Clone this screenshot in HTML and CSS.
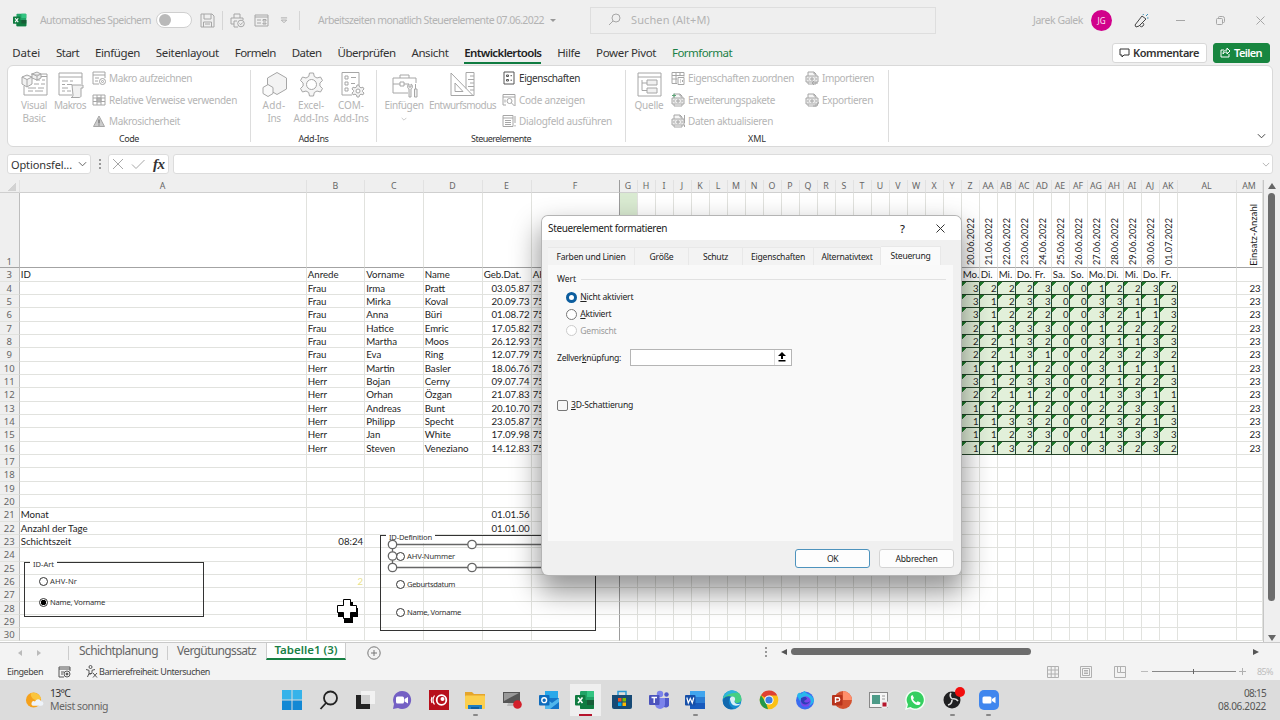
FILE: index.html
```html
<!DOCTYPE html>
<html lang="de">
<head>
<meta charset="utf-8">
<title>Arbeitszeiten monatlich Steuerelemente</title>
<link rel="stylesheet" href="styles.css">
</head>
<body>
<svg class="defs" aria-hidden="true">
  <symbol id="doc" viewBox="0 0 14 14"><path d="M3 5V1h6l2 2v2" fill="#f5f5f5"/><path d="M1 5h12v6H1z" fill="#ededed"/><path d="M3 11v2h8v-2M9 1v2h2M4 6.500L2.500 8 4 9.500M10 6.500L11.500 8 10 9.500M6 7h2v2H6z"/></symbol>
  <symbol id="chev" viewBox="0 0 10 6"><path d="M1 1l4 4 4-4"/></symbol>
  <symbol id="xl" viewBox="0 0 20 20"><rect x="5" y="1" width="14" height="18" rx="1.2" fill="#21a366"/><path d="M12 1h6a1 1 0 0 1 1 1v5h-7z" fill="#33c481"/><path d="M5 10h14v8a1 1 0 0 1-1 1H6a1 1 0 0 1-1-1z" fill="#107c41"/><path d="M12 10h7v5h-7z" fill="#185c37"/><rect x="0" y="5" width="10.5" height="10.5" rx="1" fill="#107c41"/><path d="M3 7.5l4.5 5.5M7.5 7.5L3 13" stroke="#fff" stroke-width="1.6" fill="none"/></symbol>
</svg>

<header class="titlebar">
  <svg class="app-icon" viewBox="0 0 20 20"><use href="#xl"/></svg>
  <span class="t-auto" data-w="111">Automatisches Speichern</span>
  <span class="toggle"><i></i></span>
  <svg class="ic save" viewBox="0 0 15 15"><path d="M1 1h11l2 2v11H1zM4 1v5h7V1M3.500 14V9h8v5M5 11h5"/></svg>
  <span class="vsep s1"></span>
  <svg class="ic print" viewBox="0 0 15 15"><path d="M4 5V1h6v4M4 11H1V5h12v2M4 8v6h4M4 8h3"/><circle cx="11" cy="10.500" r="3.300"/><path d="M9.500 10.500l1.200 1.200 2-2.200"/></svg>
  <svg class="ic form" viewBox="0 0 15 13"><path d="M1 1h13v11H1zM1 3h13M3 6h4M3 9h4M9 5.500h3v1.500H9zM9 9h3v1H9z"/></svg>
  <svg class="ic qat" viewBox="0 0 9 8"><path d="M1 1h7M1.500 3.500l3 3 3-3z"/></svg>
  <span class="vsep s2"></span>
  <span class="t-doc" data-w="226">Arbeitszeiten monatlich Steuerelemente 07.06.2022</span>
  <span class="caret"></span>
  <div class="search"><svg class="ic glass" viewBox="0 0 13 13"><circle cx="8" cy="5" r="4"/><path d="M5 8l-4 4"/></svg><span data-w="79">Suchen (Alt+M)</span></div>
  <span class="user" data-w="50">Jarek Galek</span>
  <span class="avatar">JG</span>
  <svg class="ic pen" viewBox="0 0 15 15"><path d="M1 12L8 3l4 3-7 7-3 1zM6 13a2 2 0 0 0 3-3"/><path d="M9 1l.5 1M12 3l2-2M13 5h1.500" class="blue"/></svg>
  <svg class="ic min" viewBox="0 0 9 9"><path d="M0 4.500h9"/></svg>
  <svg class="ic max" viewBox="0 0 9 9"><rect x=".5" y="2.500" width="6" height="6" rx="1"/><path d="M2.500 2.500v-1a1 1 0 0 1 1-1h3a2 2 0 0 1 2 2v3a1 1 0 0 1-1 1h-1"/></svg>
  <svg class="ic close" viewBox="0 0 9 9"><path d="M.5.5l8 8M8.500.5l-8 8"/></svg>
</header>

<nav class="menu">
  <span data-w="28">Datei</span><span data-w="23">Start</span><span data-w="45">Einfügen</span><span data-w="63">Seitenlayout</span><span data-w="41">Formeln</span><span data-w="30">Daten</span><span data-w="58">Überprüfen</span><span data-w="37">Ansicht</span><b data-w="77">Entwicklertools</b><span data-w="23">Hilfe</span><span data-w="60">Power Pivot</span><span class="green" data-w="60">Formformat</span>
  <div class="menu-right">
    <button class="comment"><svg class="ic" viewBox="0 0 11 10"><path d="M1 1h9v6H5L3 9V7H1z"/></svg><strong data-w="66">Kommentare</strong></button>
    <button class="share"><svg class="ic" viewBox="0 0 11 11"><path d="M4 3H1v7h8V7M3 7c0-3 2-4 4-4V1l3 3-3 3V5C5 5 4 5.500 3 7z"/></svg><strong data-w="28">Teilen</strong></button>
  </div>
</nav>

<section class="ribbon">
  <div class="group g-code">
    <div class="tools">
      <div class="big vb"><svg class="ic" viewBox="0 0 27 27"><path d="M10 3h16v21H3V15M14 5.500h12M15 9h4M21 9h3M13 13h5M20 13h4M7 17h8M17 17h6M7 20h5M14 20h8"/><path d="M1 6l5-2 5 2v7l-5 3-5-3zM1 6l5 2.500L11 6M6 8.500V16" fill="#f1f1f1"/><path d="M11 3l5-2 4 2v4l-4 2-5-2zM11 3l5 2 4-2M16 5v4" fill="#f1f1f1"/></svg><span data-w="26">Visual</span><span data-w="23">Basic</span></div>
      <div class="big mk"><svg class="ic" viewBox="0 0 27 27"><path d="M15 24H2V2h23v11M2 6h23M5 10h6M13 10h3M5 13.500h3M10 13.500h5M5 17h6M5 20h3M10 20h4"/><path d="M15 14h11v3h-2v8c0 1-1 1.500-2 1.500h-8c1 0 2-1 2-2.500z" fill="#f1f1f1"/></svg><span data-w="32">Makros</span></div>
      <div class="stack">
        <div class="row"><svg class="ic" viewBox="0 0 14 14"><path d="M7 13H1V1h12v6M1 4h12M3 7h4M3 10h3"/><circle cx="10.500" cy="10.500" r="3"/><circle cx="10.500" cy="10.500" r="1"/></svg><span data-w="83">Makro aufzeichnen</span></div>
        <div class="row"><svg class="ic" viewBox="0 0 14 14"><path d="M1 2h12v10H1zM1 5h12M1 8.500h12M5 2v10M9 2v10"/><path d="M5 5h4v4H5z" fill="#bbb"/></svg><span data-w="128">Relative Verweise verwenden</span></div>
        <div class="row"><svg class="ic" viewBox="0 0 14 14"><path d="M7 2l5.500 10.500h-11z" fill="#ccc"/><path d="M7 5.500v4M7 10.500v1" class="dark"/></svg><span data-w="71">Makrosicherheit</span></div>
      </div>
    </div>
    <div class="caption"><span data-w="20">Code</span></div>
  </div>
  <div class="group g-add">
    <div class="tools">
      <div class="big ad"><svg class="ic" viewBox="0 0 27 27"><path d="M16 1.500l9.500 5.500v11L16 23.500 6.500 18V7z" fill="#f3f3f3"/><path d="M7 13.500l5 3v6l-5 3-5-3v-6z" fill="#fafafa"/></svg><span data-w="23">Add-</span><span data-w="13">Ins</span></div>
      <div class="big ex"><svg class="ic" viewBox="0 0 27 27"><path d="M11.500 2h4l.8 3.500 2.700 1.500 3.500-1 2 3.500-2.600 2.500v3l2.600 2.500-2 3.500-3.500-1-2.700 1.500-.8 3.500h-4l-.8-3.500L8 20l-3.500 1-2-3.500L5.100 15v-3L2.500 9.500l2-3.500L8 7l2.700-1.500z" fill="#f5f5f5"/><circle cx="13.500" cy="13.500" r="5" fill="#fff"/></svg><span data-w="26">Excel-</span><span data-w="35">Add-Ins</span></div>
      <div class="big co"><svg class="ic" viewBox="0 0 27 27"><path d="M14 24H4V1.500h17V14M7 5h3v3H7zM7 11h3v3H7zM7 17h3v3H7zM13 6.500h5M13 12.500h4"/><path d="M19 14h2l.5 2 1.500.8 2-.6 1 1.800-1.500 1.400v1.200l1.500 1.400-1 1.800-2-.6-1.500.8-.5 2h-2l-.5-2-1.500-.8-2 .6-1-1.800 1.500-1.400v-1.200L14 18l1-1.800 2 .6 1.500-.8z" fill="#f3f3f3"/><circle cx="20" cy="20" r="2" fill="#fff"/></svg><span data-w="26">COM-</span><span data-w="35">Add-Ins</span></div>
    </div>
    <div class="caption"><span data-w="30">Add-Ins</span></div>
  </div>
  <div class="group g-ctl">
    <div class="tools">
      <div class="big in"><svg class="ic" viewBox="0 0 27 27"><path d="M17 22H2V7h23v5M9 7V4h9v3M2 13h7M13 13h5M9 11h4v4H9z"/><path d="M18 26v-8c-2-1-2-4 0-5v3h2v-3c2 1 2 4 0 5v8zM24.500 13v5M23.500 18h2.500v8h-2.500z" fill="#f1f1f1"/></svg><span data-w="39">Einfügen</span><svg class="ic tiny" viewBox="0 0 10 6"><use href="#chev"/></svg></div>
      <div class="big en"><svg class="ic" viewBox="0 0 27 27"><path d="M2 2l22 22.500H2zM6 12l8 8.500H6z"/><path d="M17 17.500v-16h8v23h-1M21 5h4M19 8.500h6M21 12h4M19 15.500h6M21 19h4" fill="none"/></svg><span data-w="67">Entwurfsmodus</span></div>
      <div class="stack">
        <div class="row on"><svg class="ic" viewBox="0 0 14 14"><path d="M2 1h10v12H2zM4.500 4h2v1.500h-2zM4.500 8.500h2V10h-2zM8.500 4.700H10M8.500 9.200H10"/></svg><span data-w="61">Eigenschaften</span></div>
        <div class="row"><svg class="ic" viewBox="0 0 14 14"><path d="M4 12H1V1.500h12V13M1 4h12M3 6.500v3"/><circle cx="7.500" cy="8" r="2.500"/><path d="M9.500 10l3 3"/></svg><span data-w="66">Code anzeigen</span></div>
        <div class="row"><svg class="ic" viewBox="0 0 14 14"><path d="M1 1.500h10v11H1zM1 4h10M3 6.500h6M3 8.500h6M3 10.500h6M13 2v7M13 11v1.500"/></svg><span data-w="93">Dialogfeld ausführen</span></div>
      </div>
    </div>
    <div class="caption"><span data-w="60">Steuerelemente</span></div>
  </div>
  <div class="group g-xml">
    <div class="tools">
      <div class="big qu"><svg class="ic" viewBox="0 0 27 27"><path d="M2 2h23v23H2zM2 6h23" /><path d="M6 9v10.500h5M6 12h5"/><path d="M11 9h10v5H11zM11 17h10v5H11z" fill="#f1f1f1"/></svg><span data-w="29">Quelle</span></div>
      <div class="stack st1">
        <div class="row"><svg class="ic" viewBox="0 0 14 14"><path d="M6 12.500H1V1.500h12v4M1 4.500h12M1 8h5M5 1.500v11M9 1.500v3M7 6.500h6v7H7zM9 9h1M9 11h1M11.500 9v2"/></svg><span data-w="106">Eigenschaften zuordnen</span></div>
        <div class="row"><svg class="ic" viewBox="0 0 14 14"><use href="#doc"/><path d="M1 2.500h4M3 .5v4" class="grn"/></svg><span data-w="87">Erweiterungspakete</span></div>
        <div class="row"><svg class="ic" viewBox="0 0 14 14"><use href="#doc"/><path d="M13.500 1v8M13.500 11v2"/></svg><span data-w="85">Daten aktualisieren</span></div>
      </div>
      <div class="stack st2">
        <div class="row"><svg class="ic" viewBox="0 0 14 14"><use href="#doc"/><path d="M13 12H7l2-2M7 12l2 2"/></svg><span data-w="52">Importieren</span></div>
        <div class="row"><svg class="ic" viewBox="0 0 14 14"><use href="#doc"/><path d="M8 13h4l1.500-4"/></svg><span data-w="51">Exportieren</span></div>
      </div>
    </div>
    <div class="caption"><span data-w="18">XML</span></div>
  </div>
  <svg class="ic collapse" viewBox="0 0 10 6"><use href="#chev"/></svg>
</section>

<div class="formula">
  <div class="namebox"><span data-w="61">Optionsfel...</span><svg class="ic" viewBox="0 0 10 6"><use href="#chev"/></svg></div>
  <span class="dots"><i></i><i></i><i></i></span>
  <div class="fx"><svg class="ic" viewBox="0 0 34 14"><path d="M2 2l10 10M12 2L2 12M21 7.500l4 4L33.500 3"/></svg><em>fx</em></div>
  <div class="fxinput"><svg class="ic" viewBox="0 0 10 6"><use href="#chev"/></svg></div>
</div>

<main class="work">
  <div class="sheet" id="sheet"></div>
  <div class="vscroll"><i class="up"></i><b></b><i class="down"></i></div>

  <div class="gbox art"><span class="glabel" data-w="21">ID-Art</span>
    <div class="opt"><i class="ring"></i><span data-w="27">AHV-Nr</span></div>
    <div class="opt sel"><i class="ring"></i><span data-w="55">Name, Vorname</span></div>
  </div>
  <div class="gbox def"><span class="glabel" data-w="43">ID-Definition</span>
    <div class="opt"><i class="ring"></i><span data-w="48">AHV-Nummer</span></div>
    <div class="opt"><i class="ring"></i><span data-w="48">Geburtsdatum</span></div>
    <div class="opt"><i class="ring"></i><span data-w="54">Name, Vorname</span></div>
  </div>
  <svg class="handles" viewBox="0 0 180 36"><path d="M6 6.500h174M6 29.500h174M6.500 6v24"/><circle cx="6.500" cy="6.500" r="4.200"/><circle cx="6.500" cy="18" r="4.200"/><circle cx="6.500" cy="29.500" r="4.200"/><circle cx="86" cy="6.500" r="4.200"/><circle cx="86" cy="29.500" r="4.200"/></svg>
  <svg class="cursor" viewBox="0 0 24 26"><path d="M9 4h8v6h5v9h-5v6H8v-6H2v-5z" fill="#000"/><path d="M7.500 1.500h7v6h6v7h-6v6h-7v-6h-6v-7h6z" fill="#fff" stroke="#000"/></svg>
</main>

<div class="sheettabs">
  <i class="nav-l"></i><i class="nav-r"></i><span class="div"></span>
  <span class="st" data-w="79">Schichtplanung</span><span class="div d2"></span><span class="st" data-w="79">Vergütungssatz</span>
  <span class="active"><b data-w="63">Tabelle1 (3)</b></span>
  <svg class="ic add" viewBox="0 0 14 14"><circle cx="7" cy="7" r="6.200"/><path d="M7 4v6M4 7h6"/></svg>
  <div class="hscroll"><span class="dots"><i></i><i></i><i></i></span><i class="left"></i><b></b><i class="right"></i></div>
</div>

<footer class="status">
  <span data-w="36">Eingeben</span>
  <svg class="ic rec" viewBox="0 0 13 12"><path d="M6 11H1V1h11v4M1 3h11M3 6h3M3 8h2"/><circle cx="9" cy="8" r="3"/><circle cx="9" cy="8" r="1" fill="#444"/></svg>
  <svg class="ic acc" viewBox="0 0 13 13"><circle cx="5.500" cy="2" r="1.500"/><path d="M1 4.500l3 .8v3L2.500 12M10 4.500l-3 .8v3M4 8.500h3M4.500 9l1 1M8 8l4 4.500M12 8l-4 4.500"/></svg>
  <span data-w="111">Barrierefreiheit: Untersuchen</span>
  <div class="views">
    <svg class="ic" viewBox="0 0 12 12"><path d="M.5.500h11v11H.5zM.5 4h11M.5 8h11M4.200.5v11M8 .5v11"/></svg>
    <svg class="ic" viewBox="0 0 12 12"><path d="M.5.500h11v11H.5zM2.500 2.500h7v7h-7zM4 4.500h4M4 6h4M4 7.500h4"/></svg>
    <svg class="ic" viewBox="0 0 12 12"><path d="M.5.500h11v11H.5zM3.500.5v6h3M6.500.5v6h5"/></svg>
    <span class="minus"></span><span class="track"><i></i></span><svg class="ic plus" viewBox="0 0 7 7"><path d="M0 3.500h7M3.500 0v7"/></svg><span class="pct" data-w="16">85%</span>
  </div>
</footer>

<footer class="taskbar">
  <svg class="weather" viewBox="0 0 20 20"><circle cx="9" cy="10" r="8" fill="#f5a11c"/><path d="M6 3a8 8 0 0 1 11 6 7 7 0 0 1-11-6z" fill="#fbc53c"/><path d="M8 16h9a2.400 2.400 0 0 0 0-4.800 3.500 3.500 0 0 0-6.500.4A2.300 2.300 0 0 0 8 16z" fill="#eef3f9"/></svg>
  <div class="wtext"><span data-w="20">13°C</span><span class="dim" data-w="58">Meist sonnig</span></div>
  <div class="apps">
    <span><svg viewBox="0 0 20 20"><path d="M0 0h9.500v9.500H0zM10.500 0H20v9.500h-9.500z" fill="#36b3ea"/><path d="M0 10.500h9.500V20H0zM10.500 10.500H20V20h-9.500z" fill="#1388d4"/></svg></span>
    <span><svg viewBox="0 0 20 20" fill="none" stroke="#222" stroke-width="1.800"><circle cx="11.500" cy="8" r="6.500"/><path d="M7 13l-5.500 6"/></svg></span>
    <span><svg viewBox="0 0 20 20"><rect x="1" y="5" width="14" height="14" fill="#222"/><rect x="6" y="1" width="14" height="13" fill="#f5f5f5" opacity=".88"/><rect x="6" y="5" width="9" height="9" fill="#cfcfcf"/></svg></span>
    <span><svg viewBox="0 0 20 20"><path d="M10 1a9 9 0 1 1-4 17l-5 1 1-5A9 9 0 0 1 10 1z" fill="#7460c4"/><rect x="4" y="6.500" width="8" height="7" rx="1.500" fill="#fff"/><path d="M12.500 9l3.500-2v6.500l-3.500-2z" fill="#fff"/></svg></span>
    <span><svg viewBox="0 0 20 20"><rect width="20" height="20" fill="#b8101b"/><g fill="none" stroke="#fff"><circle cx="12.500" cy="10" r="4.800" stroke-width="1.800"/><path d="M5.500 5.500q-3 4.500 0 9M3 7q-1.500 3 0 6" stroke-width="1.200"/></g><circle cx="13.500" cy="9" r="2" fill="#fff"/></svg></span>
    <span class="run"><svg viewBox="0 0 20 20"><path d="M0 2h7l2 2h11v4H0z" fill="#e5a52c"/><rect y="5.500" width="20" height="13.500" rx="1" fill="#fbcf4e"/><path d="M3 19v-4h14v4z" fill="#1c7fc4"/><path d="M6 17h8v2H6z" fill="#0f5c9c"/></svg></span>
    <span><svg viewBox="0 0 20 20"><path d="M1 2h17v11H1z" fill="#555"/><path d="M2 3h15L2 11z" fill="#999"/><path d="M5 16h8v-3H6z" fill="#bbb"/><circle cx="15.500" cy="14.500" r="4.300" fill="#d3202b"/></svg></span>
    <span><svg viewBox="0 0 20 20"><rect x="6" y="1" width="13" height="14" fill="#28a8ea"/><path d="M6 8h14v11H6z" fill="#1475c8"/><path d="M6 8l7 5 7-5v4l-9 7H6z" fill="#50b6ec"/><rect y="5" width="10.500" height="10.500" rx="1" fill="#0f6cbd"/><circle cx="5.200" cy="10.200" r="2.400" fill="none" stroke="#fff" stroke-width="1.400"/></svg></span>
    <span class="cur"><svg viewBox="0 0 20 20"><use href="#xl"/></svg></span>
    <span><svg viewBox="0 0 20 20"><path d="M6 5V1.500h8V5" fill="none" stroke="#2b9bd7" stroke-width="1.500"/><path d="M0 5h20v12a2 2 0 0 1-2 2H2a2 2 0 0 1-2-2z" fill="#174a75"/><path d="M6 8h3.500v3.500H6z" fill="#f25022"/><path d="M10.500 8H14v3.500h-3.500z" fill="#7fba00"/><path d="M6 12.500h3.500V16H6z" fill="#00a4ef"/><path d="M10.500 12.500H14V16h-3.500z" fill="#ffb900"/></svg></span>
    <span><svg viewBox="0 0 20 20"><circle cx="11" cy="4" r="3.200" fill="#7b83eb"/><circle cx="17.500" cy="4.500" r="2.200" fill="#5059c9"/><path d="M14 8h6v6a3 3 0 0 1-6 1z" fill="#5059c9"/><path d="M6 8h10v6a5 5 0 0 1-10 0z" fill="#7b83eb"/><rect y="5" width="10.500" height="10" rx="1" fill="#4b53bc"/><path d="M2.500 7.500h5.500M5.200 7.500v5.500" stroke="#fff" stroke-width="1.400"/></svg></span>
    <span class="run"><svg viewBox="0 0 20 20"><path d="M5 1h15v6H5z" fill="#41a5ee"/><path d="M5 7h15v6H5z" fill="#2b7cd3"/><path d="M5 13h15v6H5z" fill="#185abd"/><rect y="5" width="10.500" height="10.500" rx="1" fill="#164fa8"/><path d="M1.800 7.500l1.500 5.500 2-4.500 2 4.500 1.500-5.500" fill="none" stroke="#fff" stroke-width="1.200"/></svg></span>
    <span><svg viewBox="0 0 20 20"><circle cx="10" cy="10" r="9.500" fill="#158bd0"/><path d="M1 8C3-1 19-2 19.500 9c0 5-7 5-7 2 1-2-1-5-5-4.500C4 7 2 9 1 8z" fill="#46cf83"/><path d="M1 8C3 0 12-2 16 3 10 2 5 5 1 8z" fill="#2fb4dc"/><path d="M8 7c5-2 6 2 4.500 4-.5 2 2 4 6 2.500-2 3-7 3-9 0-1-2-2-4.500-1.500-6.500z" fill="#d9f0f7"/><path d="M1 10c2-5 7-4 8-3-4 3-2 10 3 11.500C6 21 0 16 1 10z" fill="#1269ae"/></svg></span>
    <span><svg viewBox="0 0 20 20"><circle cx="10" cy="10" r="9.300" fill="#fbc116"/><path d="M10 10L2 5.200a9.300 9.300 0 0 1 16.300.3H10z" fill="#df4032"/><path d="M2 5.200l5 7.500L9 19.200A9.300 9.300 0 0 1 2 5.200z" fill="#23984c"/><circle cx="10" cy="10" r="4.600" fill="#fff"/><circle cx="10" cy="10" r="3.600" fill="#3c7fe2"/></svg></span>
    <span><svg viewBox="0 0 20 20"><circle cx="10" cy="10.500" r="9" fill="#3b6cf0"/><path d="M2 6C3 2 5 2 6 4c2-1 2-3 4-3-1 3 9 3 9 10-3 7-14 7-14 0z" fill="#28b7ec"/><circle cx="10.500" cy="11.500" r="5.200" fill="#7a45ea"/><path d="M6 8c3-1 5-2 6 1l-3 2c1 2 4 2 6 0-1 4-8 5-9 0z" fill="#2b3fb8"/></svg></span>
    <span><svg viewBox="0 0 20 20"><circle cx="11" cy="10" r="9" fill="#d35230"/><path d="M11 1a9 9 0 0 1 9 9h-9z" fill="#ff8f6b"/><rect y="5" width="10.500" height="10.500" rx="1" fill="#b7321b"/><path d="M3.500 13V7.700H6a1.700 1.700 0 0 1 0 3.400H3.500" fill="none" stroke="#fff" stroke-width="1.400"/></svg></span>
    <span><svg viewBox="0 0 20 20"><rect x=".5" y="2.500" width="18" height="15" fill="#f5f5f5" stroke="#888"/><rect x="3" y="5" width="8" height="9" fill="#4d9b88"/><path d="M13 6h3M13 9h3" stroke="#999"/><circle cx="15.500" cy="14.500" r="4" fill="#eee"/><rect x="13.500" y="12.500" width="4" height="4" fill="#b5152b"/></svg></span>
    <span><svg viewBox="0 0 20 20"><path d="M10 0a10 10 0 1 1-5 18.500L0 20l1.500-5A10 10 0 0 1 10 0z" fill="#f3fff5"/><path d="M10 1.500a8.500 8.500 0 1 1-4.500 15.500L2 18l1-3.500A8.500 8.500 0 0 1 10 1.500z" fill="#35cf60"/><path d="M6 6l1.500-1 1.500 3-1 1.200c1 1.800 2 2.500 3.500 3.200l1.200-1.200 2.800 1.300c0 2-1.500 2.700-3 2.500C9 14.500 5 10 6 6z" fill="#fff"/></svg></span>
    <span class="run"><svg class="obs" viewBox="0 0 22 22"><circle cx="9" cy="13" r="8.500" fill="#202022"/><path d="M9 12q-3-3-1-6M9 12q4-1 6 2M9 13q0 4-4 5" fill="none" stroke="#ddd" stroke-width="1.600"/><circle cx="17" cy="5" r="5" fill="#f20d0d"/></svg></span>
    <span class="run"><svg viewBox="0 0 20 20"><rect width="20" height="20" rx="5" fill="#3f86ee"/><rect x="3.500" y="6.500" width="9" height="7" rx="1.500" fill="#fff"/><path d="M13 9l3.500-2.300v6.500L13 11z" fill="#fff"/></svg></span>
  </div>
  <div class="clock"><span data-w="22">08:15</span><span data-w="48">08.06.2022</span></div>
</footer>

<div class="dialog">
  <div class="dtitle"><span data-w="119">Steuerelement formatieren</span><b>?</b><svg class="ic" viewBox="0 0 9 9"><path d="M.5.5l8 8M8.500.5l-8 8"/></svg></div>
  <div class="dtabs"><span class="w1"><i data-w="69">Farben und Linien</i></span><span class="w2"><i data-w="24">Größe</i></span><span class="w2"><i data-w="25">Schutz</i></span><span class="w3"><i data-w="54">Eigenschaften</i></span><span class="w4"><i data-w="51">Alternativtext</i></span><span class="w5"><i data-w="40">Steuerung</i></span></div>
  <div class="dpanel">
    <div class="legend"><span data-w="19">Wert</span><hr></div>
    <div class="radio on"><i></i><span data-w="53"><u>N</u>icht aktiviert</span></div>
    <div class="radio"><i></i><span data-w="31"><u>A</u>ktiviert</span></div>
    <div class="radio off"><i></i><span data-w="36">Gemischt</span></div>
    <div class="link"><span data-w="64">Zellver<u>k</u>nüpfung:</span><div class="ref"><div class="refbtn"><svg viewBox="0 0 8 10"><path d="M4 0l4 4H5v3H3V4H0zM.5 8h7v1.500h-7z"/></svg></div></div></div>
    <div class="check"><i></i><span data-w="62"><u>3</u>D-Schattierung</span></div>
  </div>
  <div class="dbtns"><button class="ok"><span data-w="11">OK</span></button><button><span data-w="42">Abbrechen</span></button></div>
</div>
<script src="app.js"></script>
</body>
</html>
```
FILE: styles.css
```css
* { box-sizing: border-box; }
body { margin: 0; width: 1280px; height: 720px; overflow: hidden; background: #efefef; font-family: "Noto Sans", "Open Sans", sans-serif; font-size: 10px; color: #333; display: flex; flex-direction: column; position: relative; font-variant-ligatures: none; }
span, b, strong, i, em { white-space: nowrap; font-style: normal; }
b, strong { font-weight: 600; }
svg { flex: none; }
button { font: inherit; color: inherit; padding: 0; }
.defs { position: absolute; width: 0; height: 0; }
.ic { fill: none; stroke: #a6a6a6; stroke-width: 1; }

/* title bar */
.titlebar { height: 40px; display: flex; align-items: center; flex: none; color: #b3b3b3; font-size: 10.5px; }
.app-icon { width: 14px; height: 14px; margin: 0 13px; }
.t-auto { width: 111px; }
.toggle { width: 36px; height: 16px; margin-left: 5px; border: 1px solid #cfcfcf; border-radius: 8px; background: #fff; display: flex; align-items: center; padding-left: 2px; }
.toggle i { width: 12px; height: 12px; border-radius: 50%; background: #b9b9b9; }
.save { width: 15px; height: 15px; margin-left: 8px; }
.vsep { width: 1px; height: 19px; background: #d5d5d5; }
.s1 { margin-left: 7px; }
.print { width: 15px; height: 15px; margin-left: 7px; }
.form { width: 15px; height: 13px; margin-left: 9px; }
.qat { width: 8px; height: 7px; margin-left: 11px; }
.s2 { margin-left: 11px; }
.t-doc { width: 227px; margin-left: 18px; }
.caret { border: 3px solid transparent; border-top-color: #999; border-bottom: 0; margin-left: 5px; }
.search { width: 346px; height: 27px; margin-left: 34px; border: 1px solid #dedede; display: flex; align-items: center; font-size: 11px; padding: 0 0 1px 17px; }
.glass { width: 13px; height: 13px; margin-right: 10px; }
.user { width: 50px; margin-left: 97px; }
.avatar { width: 21px; height: 21px; margin-left: 8px; border-radius: 50%; background: #d1008b; color: #ffe6f6; font-size: 8px; display: flex; align-items: center; justify-content: center; }
.pen { width: 15px; height: 15px; margin-left: 21.500px; stroke: #444; }
.blue { stroke: #3a8fb7; }
.min { width: 9px; height: 9px; margin-left: 27px; }
.max { width: 9px; height: 9px; margin-left: 31px; }
.close { width: 9px; height: 9px; margin-left: 31px; }

/* ribbon tabs */
.menu { height: 25px; flex: none; display: flex; align-items: center; gap: 15.900px; padding-left: 12.200px; font-size: 11.5px; }
.menu > b { height: 21px; line-height: 19px; border-bottom: 2px solid #107c41; margin-top: 1px; color: #222; }
.menu .green { color: #1b7f46; }
.menu-right { margin-left: auto; padding-right: 10px; display: flex; gap: 6px; }
.menu-right button { height: 20px; border-radius: 3px; display: flex; align-items: center; border: 1px solid #d8d8d8; background: #fff; padding: 0 6px; gap: 3px; font-size: 11px; }
.comment { width: 95px; }
.comment .ic { width: 11px; height: 10px; stroke: #333; }
.menu-right .share { width: 57px; background: #188640; border-color: #188640; color: #fff; }
.share .ic { width: 11px; height: 11px; stroke: #fff; }

/* ribbon */
.ribbon { height: 82px; flex: none; margin: 0 7px; border: 1px solid #d9d9d9; border-radius: 6px; background: #fff; display: flex; padding: 4px 0; }
.group { display: flex; flex-direction: column; border-right: 1px solid #ddd; color: #b5b5b5; }
.g-code { width: 243px; }
.g-add { width: 126px; }
.g-ctl { width: 249px; }
.g-xml { width: 263px; }
.tools { display: flex; height: 63px; flex: none; }
.caption { height: 12px; line-height: 12px; text-align: center; font-size: 9px; color: #333; }
.big { display: flex; flex-direction: column; align-items: center; font-size: 10px; line-height: 13.300px; }
.big .ic { width: 27px; height: 27px; margin: 1px 0 1px; }
.big .tiny { width: 6px; height: 4px; margin: 5px 0 0; }
.vb { width: 36px; margin-left: 8px; }
.mk { width: 36px; }
.ad { width: 36px; margin-left: 5px; }
.ex { width: 38px; }
.co { width: 42px; }
.in { width: 42px; margin-left: 6px; }
.en { width: 69px; margin-left: 3px; }
.qu { width: 34px; margin-left: 6px; }
.stack { display: flex; flex-direction: column; margin-left: 4px; }
.row { height: 21.400px; flex: none; margin-top: -2px; padding-bottom: 1px; display: flex; align-items: center; gap: 3px; font-size: 10px; }
.row + .row { margin-top: 0; }
.row .ic { width: 14px; height: 14px; }
.row.on { color: #333; }
.row.on .ic, .ic .dark { stroke: #555; }
.ic .grn { stroke: #5aa577; }
.g-ctl .stack { margin-left: 5px; }
.st1 { margin-left: 5px; }
.g-xml .st2 { margin-left: 11px; }
.collapse { width: 9px; height: 6px; margin: auto 6px 3px auto; stroke: #333; }

/* formula bar */
.formula { height: 33px; flex: none; display: flex; padding: 7px 7px 0; }
.namebox, .fx, .fxinput { height: 20px; background: #fff; border: 1px solid #dcdcdc; border-radius: 3px; display: flex; align-items: center; }
.namebox { width: 84px; padding-left: 3px; gap: 6px; font-size: 11px; }
.namebox .ic { width: 9px; height: 6px; stroke: #555; }
.dots { display: flex; flex-direction: column; gap: 2px; justify-content: center; }
.dots i { width: 2px; height: 2px; background: #999; }
.formula .dots { height: 20px; margin: 0 7.500px; }
.fx { width: 61px; padding-left: 2px; }
.fx .ic { width: 34px; height: 14px; }
.fx em { font: italic bold 15px/18px "Liberation Serif", serif; margin-left: 8px; letter-spacing: -.5px; }
.fxinput { flex: 1; margin-left: 4px; justify-content: flex-end; padding-right: 2px; }
.fxinput .ic { width: 8px; height: 5px; }

/* worksheet */
.work { height: 463px; flex: none; display: flex; position: relative; border-bottom: 1px solid #c9c9c9; overflow: hidden; }
.sheet { width: 1262.500px; flex: none; display: grid; grid-template-columns: 19.500px 287px 58.500px 58.500px 59px 49px 88px repeat(31, 18px) 59px 26px; grid-template-rows: 13px 75.300px repeat(28, 13.340px); background: #fff; font: 9.700px/13.200px "Lato", "Noto Sans", sans-serif; color: #1d1d1d; }
.c { border-right: 1px solid #e1e2de; border-bottom: 1px solid #e1e2de; padding: 0 .8px 0 1.200px; white-space: nowrap; min-width: 0; min-height: 0; }
.c.h { background: #efefef; color: #666; text-align: center; font: 8.800px/13px "Noto Sans", sans-serif; border-bottom-color: #cfcfcf; border-right-color: #e1e1e1; padding: 0; }
.c.n { background: #efefef; color: #666; text-align: center; font: 9.500px/14px "Noto Sans", sans-serif; border-right-color: #bdbdbd; padding: 0; }
.c.r { text-align: right; }
.c.frz { border-bottom-color: #a3a3a3; }
.c.split { border-right-color: #9c9c9c; }
.c.date { display: flex; align-items: flex-end; justify-content: center; padding: 0 0 2px 1px; font-size: 9.200px; }
.c.date span { writing-mode: vertical-rl; transform: rotate(180deg); line-height: 14px; }
.c.long { font-size: 9.600px; padding: 0 0 1px 9px; }
.c.tint { background: #d9ead1; }
.c.k { background: linear-gradient(135deg, #1d7a2b 2.800px, transparent 3.300px) #e2f0da; border-color: #25452a; text-align: right; padding-right: 0; }
.c.ktop { border-bottom-color: #25452a; }
.c.yel { color: #e9e28a; text-align: right; }
.c.one { padding-top: 62px; }
.corner { width: 8px; height: 8px; margin: 3px 0 0 8px; background: linear-gradient(135deg, transparent 50%, #d2d2d2 50%); }
.vscroll { flex: 1; display: flex; flex-direction: column; align-items: center; border-left: 1px solid #c6c6c6; padding: 3px 0 1px; }
.vscroll b { width: 7px; height: 408px; background: #6c6c6c; border-radius: 4px; margin-top: 4px; }
.up { border: 4px solid transparent; border-bottom: 6px solid #666; border-top: 0; }
.down { border: 4px solid transparent; border-top: 6px solid #666; border-bottom: 0; margin-top: auto; }

/* form controls floating above the cells */
.gbox { position: absolute; border: 1px solid #333; font-size: 7.600px; line-height: 10px; color: #333; }
.glabel { position: absolute; top: -4px; left: 5px; background: #fff; padding: 0 3px; line-height: 11px; height: 11px; }
.art { left: 24px; top: 382px; width: 180px; height: 55px; padding: 13px 0 0 14px; }
.def { left: 380px; top: 355px; width: 216px; height: 96px; padding: 15px 0 0 15px; }
.opt { display: flex; align-items: center; gap: 2px; height: 10px; }
.art .opt + .opt { margin-top: 11px; }
.def .opt + .opt { margin-top: 18px; }
.ring { width: 9px; height: 9px; border: 1.200px solid #333; border-radius: 50%; background: #fff; }
.sel .ring { background: radial-gradient(circle, #000 2.500px, #fff 3px); }
.handles { position: absolute; left: 386px; top: 357.500px; width: 180px; height: 36px; fill: #fff; stroke: #666; stroke-width: 1.300; }
.cursor { position: absolute; left: 336px; top: 418px; width: 24px; height: 26px; }

/* sheet tabs */
.sheettabs { height: 20px; flex: none; display: flex; align-items: center; background: #f3f3f3; font-size: 12px; color: #666; }
.nav-l, .nav-r, .left, .right { border: 3.500px solid transparent; }
.nav-l { border-right: 4px solid #bbb; border-left: 0; margin-left: 18px; }
.nav-r { border-left: 4px solid #bbb; border-right: 0; margin-left: 15px; }
.div { width: 1px; height: 14px; background: #ccc; margin: 0 10px 0 27px; }
.d2 { margin: 0 9px 0 9px; }
.st { height: 18px; line-height: 14px; }
.active { width: 80px; height: 17px; margin: -3px 0 0 10px; border: 1px solid #ccc; border-top: 0; border-bottom: 2px solid #168043; background: #fff; color: #1a7f46; line-height: 14px; text-align: center; font-size: 11.500px; }
.add { width: 14px; height: 14px; margin-left: 21px; stroke: #777; }
.hscroll { margin: -3px 0 0 auto; display: flex; align-items: center; width: 515px; }
.left { border-right: 6px solid #555; border-left: 0; margin-left: 14px; }
.right { border-left: 6px solid #555; border-right: 0; margin-left: auto; margin-right: 21px; }
.hscroll b { width: 240px; height: 7px; border-radius: 4px; background: #6c6c6c; margin-left: 4px; }

/* status bar */
.status { height: 17px; flex: none; display: flex; align-items: center; background: #f3f3f3; font-size: 9px; color: #444; padding-left: 7px; }
.status .ic { stroke: #555; }
.rec { width: 13px; height: 12px; margin-left: 15px; }
.acc { width: 13px; height: 13px; margin: 0 1px 0 14px; }
.views { margin-left: auto; display: flex; align-items: center; color: #bdbdbd; padding-right: 7px; }
.status .views .ic { width: 12px; height: 12px; margin-right: 21.500px; stroke: #b0b0b0; }
.minus { width: 7px; height: 1px; background: #bbb; margin-left: -6px; }
.track { width: 84px; height: 1px; background: #888; margin-left: 4px; }
.track i { display: block; width: 1px; height: 5px; margin: -2px 0 0 41px; background: #666; }
.status .views .plus { width: 7px; height: 7px; margin: 0 11px 0 3px; }

/* taskbar */
.taskbar { height: 40px; flex: none; display: flex; align-items: center; background: #dcdcdc; color: #333; font-size: 10.500px; }
.weather { width: 19px; height: 20px; margin-left: 25px; }
.wtext { width: 60px; margin: 0 0 0 6px; display: flex; flex-direction: column; align-items: flex-start; line-height: 13.500px; }
.dim { color: #666; }
.apps { display: flex; margin-left: 163.700px; }
.apps span { width: 36.680px; height: 40px; display: flex; align-items: center; justify-content: center; position: relative; }
.apps svg { width: 20px; height: 20px; }
.apps .obs { width: 22px; height: 22px; margin: -4px 0 0 3px; }
.run::after { content: ""; position: absolute; bottom: 4px; left: 16px; width: 5px; height: 2px; border-radius: 1px; background: #888; }
.apps .cur { background: linear-gradient(#efefef, #efefef) center / 31px 32px no-repeat; }
.cur::after { content: ""; position: absolute; bottom: 4px; left: 12px; width: 13px; height: 2px; background: #b5142c; }
.clock { margin: 0 14px 0 auto; display: flex; flex-direction: column; align-items: flex-end; line-height: 13.500px; color: #555; font-size: 10px; }

/* dialog window */
.dialog { position: absolute; left: 542px; top: 216px; width: 419px; height: 359px; border-radius: 6px; background: #f0f0f0; box-shadow: 0 0 0 1px #b4b4b4, 0 14px 28px 3px rgba(0, 0, 0, .42); display: flex; flex-direction: column; overflow: hidden; font-size: 8.600px; color: #222; }
.dialog i { display: inline-block; }
.dtitle { height: 24px; background: #fff; display: flex; align-items: center; padding: 0 16px 0 6px; font-size: 10px; }
.dtitle b { margin-left: auto; font-weight: 500; font-size: 11px; }
.dtitle svg { width: 9px; height: 9px; margin-left: 31px; stroke: #333; }
.dtabs { height: 25px; display: flex; align-items: flex-end; padding-left: 6px; }
.dtabs span { height: 18px; line-height: 18px; text-align: center; background: #f3f3f3; border: 1px solid #e8e8e8; border-left: 0; border-bottom: 0; }
.w1 { width: 87px; } .w2 { width: 54px; } .w3 { width: 71px; } .w4 { width: 67px; }
.dtabs .w5 { width: 60px; height: 19px; background: #fafafa; }
.dpanel { margin: 0 8px 0 6px; height: 276px; background: #f9f9f9; padding: 7px 7px 0 9px; }
.legend { display: flex; align-items: center; gap: 5px; height: 14px; }
.legend hr { flex: 1; border: 0; border-top: 1px solid #e1e1e1; margin: 0; }
.radio { display: flex; align-items: center; gap: 3px; height: 16.700px; padding-left: 9.300px; }
.legend + .radio { margin-top: 3px; }
.radio i { width: 11px; height: 11px; border: 1px solid #777; border-radius: 50%; background: #fff; }
.radio.on i { border: 3.500px solid #0c5d9e; }
.radio.off { color: #999; }
.radio.off i { border-color: #ccc; }
.link { display: flex; align-items: center; margin-top: 9.500px; height: 18px; }
.ref { width: 162px; height: 17px; margin-left: 9px; border: 1px solid #b5b5b5; background: #fff; display: flex; justify-content: flex-end; }
.refbtn { width: 17px; border-left: 1px solid #ddd; padding: 2px 4px 0 3px; }
.ref svg { display: block; width: 8px; height: 10px; fill: #000; }
.check { display: flex; align-items: center; gap: 3px; margin-top: 29.500px; height: 18px; }
.check i { width: 11px; height: 11px; border: 1px solid #777; border-radius: 2px; background: #f7f7f7; }
.dbtns { display: flex; justify-content: flex-end; gap: 9px; padding: 8px 7px 0; }
.dbtns button { width: 75px; height: 19px; border: 1px solid #d4d4d4; border-radius: 3px; background: #fdfdfd; line-height: 18px; }
.dbtns .ok { border-color: #4e93bd; }
```
FILE: app.js
```js
const columns = ['A', 'B', 'C', 'D', 'E', 'F', 'G', 'H', 'I', 'J', 'K', 'L', 'M', 'N', 'O', 'P', 'Q', 'R', 'S', 'T', 'U', 'V', 'W', 'X', 'Y', 'Z', 'AA', 'AB', 'AC', 'AD', 'AE', 'AF', 'AG', 'AH', 'AI', 'AJ', 'AK', 'AL', 'AM'];
const Z = columns.indexOf('Z');
const AK = columns.indexOf('AK');
const dates = ['20.06.2022', '21.06.2022', '22.06.2022', '23.06.2022', '24.06.2022', '25.06.2022', '26.06.2022', '27.06.2022', '28.06.2022', '29.06.2022', '30.06.2022', '01.07.2022'];
const days = ['Mo.', 'Di.', 'Mi.', 'Do.', 'Fr.', 'Sa.', 'So.', 'Mo.', 'Di.', 'Mi.', 'Do.', 'Fr.'];
const people = [
  ['Frau', 'Irma', 'Pratt', '03.05.87', '322230012232'],
  ['Frau', 'Mirka', 'Koval', '20.09.73', '312330033113'],
  ['Frau', 'Anna', 'Büri', '01.08.72', '312220032113'],
  ['Frau', 'Hatice', 'Emric', '17.05.82', '213330012222'],
  ['Frau', 'Martha', 'Moos', '26.12.93', '221320031133'],
  ['Frau', 'Eva', 'Ring', '12.07.79', '221310023232'],
  ['Herr', 'Martin', 'Basler', '18.06.76', '111120031111'],
  ['Herr', 'Bojan', 'Cerny', '09.07.74', '312330021223'],
  ['Herr', 'Orhan', 'Özgan', '21.07.83', '221120013311'],
  ['Herr', 'Andreas', 'Bunt', '20.10.70', '112120022331'],
  ['Herr', 'Philipp', 'Specht', '23.05.87', '113320023213'],
  ['Herr', 'Jan', 'White', '17.09.98', '112330013333'],
  ['Herr', 'Steven', 'Veneziano', '14.12.83', '113220033232']
];
const single = {
  A3: 'ID', B3: 'Anrede', C3: 'Vorname', D3: 'Name', E3: 'Geb.Dat.', F3: 'AH',
  A21: 'Monat', A22: 'Anzahl der Tage', A23: 'Schichtszeit',
  B23: '08:24', B26: '2', E21: '01.01.56', E22: '01.01.00'
};

function cell(cls, html) {
  return '<div class="c ' + cls + '">' + (html || '') + '</div>';
}

function cellFor(row, name, i) {
  let cls = name === 'F' ? 'split ' : '';
  const inPlan = i >= Z && i <= AK;
  if (row === 1) {
    cls += 'frz ';
    if (name === 'G') cls += 'tint ';
    if (inPlan) return cell(cls + 'date', '<span>' + dates[i - Z] + '</span>');
    if (name === 'AM') return cell(cls + 'date long', '<span>Einsatz-Anzahl</span>');
    return cell(cls);
  }
  if (row === 3 && inPlan) return cell(cls + 'ktop', days[i - Z]);
  const p = people[row - 4];
  if (p) {
    if (i >= 1 && i <= 4) return cell(cls + (i === 4 ? 'r' : ''), p[i - 1]);
    if (name === 'F') return cell(cls, '75');
    if (inPlan) return cell(cls + 'k', p[4][i - Z]);
    if (name === 'AM') return cell(cls + 'r', '23');
  }
  const key = name + row;
  if (key === 'B26') cls += 'yel ';
  if (['B23', 'E21', 'E22'].includes(key)) cls += 'r ';
  return cell(cls, single[key]);
}

let html = cell('h', '<div class="corner"></div>') + columns.map(n => cell('h' + (n === 'F' ? ' split' : ''), n)).join('');
for (let row = 1; row <= 30; row++) {
  if (row === 2) continue;
  html += cell(row === 1 ? 'n frz one' : 'n', String(row));
  html += columns.map((n, i) => cellFor(row, n, i)).join('');
}
document.getElementById('sheet').innerHTML = html;

// Track every label so that it fills its intended width.
document.querySelectorAll('[data-w]').forEach(el => {
  const range = document.createRange();
  range.selectNodeContents(el);
  const natural = range.getBoundingClientRect().width;
  const gap = (Number(el.dataset.w) - natural) / el.textContent.length;
  el.style.letterSpacing = gap.toFixed(3) + 'px';
});
```
